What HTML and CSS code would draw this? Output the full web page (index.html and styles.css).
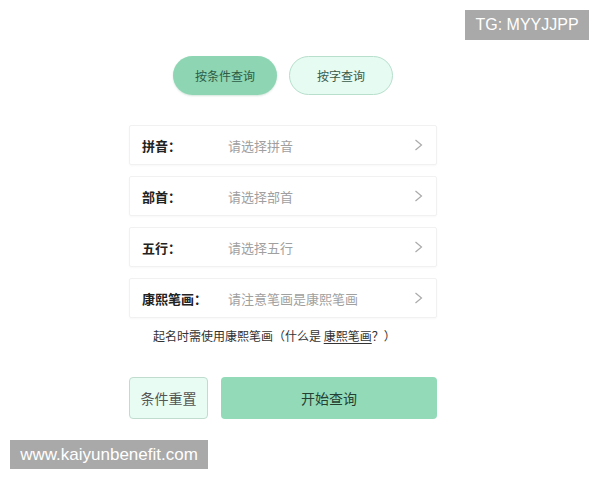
FILE: index.html
```html
<!DOCTYPE html>
<html lang="zh">
<head>
<meta charset="utf-8">
<link rel="stylesheet" href="styles.css">
</head>
<body>
<div class="page">
  <div class="tabs">
    <div class="tab tab-active">按条件查询</div>
    <div class="tab tab-idle">按字查询</div>
  </div>
  <div class="rows">
    <div class="row">
      <span class="label">拼音：</span>
      <span class="value">请选择拼音</span>
      <svg class="chev" width="9" height="12" viewBox="0 0 9 12"><polyline points="1.5,1 7.5,6 1.5,11" fill="none" stroke="#aaa" stroke-width="1.2"/></svg>
    </div>
    <div class="row">
      <span class="label">部首：</span>
      <span class="value">请选择部首</span>
      <svg class="chev" width="9" height="12" viewBox="0 0 9 12"><polyline points="1.5,1 7.5,6 1.5,11" fill="none" stroke="#aaa" stroke-width="1.2"/></svg>
    </div>
    <div class="row">
      <span class="label">五行：</span>
      <span class="value">请选择五行</span>
      <svg class="chev" width="9" height="12" viewBox="0 0 9 12"><polyline points="1.5,1 7.5,6 1.5,11" fill="none" stroke="#aaa" stroke-width="1.2"/></svg>
    </div>
    <div class="row">
      <span class="label">康熙笔画：</span>
      <span class="value">请注意笔画是康熙笔画</span>
      <svg class="chev" width="9" height="12" viewBox="0 0 9 12"><polyline points="1.5,1 7.5,6 1.5,11" fill="none" stroke="#aaa" stroke-width="1.2"/></svg>
    </div>
  </div>
  <p class="note">起名时需使用康熙笔画（什么是 <span class="link">康熙笔画</span>？）</p>
  <div class="actions">
    <div class="btn btn-reset">条件重置</div>
    <div class="btn btn-start">开始查询</div>
  </div>
</div>
<div class="wm wm-tg">TG: MYYJJPP</div>
<div class="wm wm-site">www.kaiyunbenefit.com</div>
</body>
</html>
```

FILE: styles.css
```css
html, body {
  margin: 0;
  padding: 0;
  background: #ffffff;
}
body {
  width: 600px;
  height: 480px;
  position: relative;
  overflow: hidden;
  font-family: "Noto Sans CJK SC", "Noto Sans", sans-serif;
}
.page {
  width: 308px;
  margin-left: 129px;
  padding-top: 56px;
  display: flex;
  flex-direction: column;
}
.tabs {
  display: flex;
  gap: 12px;
  margin-left: 44px;
}
.tab {
  width: 104px;
  height: 39px;
  box-sizing: border-box;
  border-radius: 20px;
  display: flex;
  align-items: center;
  justify-content: center;
  font-size: 12px;
}
.tab-active {
  background: #8ed5b3;
  color: #2d5c46;
  box-shadow: 0 1px 2px rgba(80, 150, 115, 0.25);
}
.tab-idle {
  background: #e6fbf2;
  border: 1px solid #b7dfcc;
  color: #3a5a4b;
}
.rows {
  margin-top: 30px;
  display: flex;
  flex-direction: column;
  gap: 11px;
}
.row {
  height: 40px;
  box-sizing: border-box;
  border: 1px solid #f1f1f1;
  border-radius: 2px;
  box-shadow: 0 1px 2px rgba(0, 0, 0, 0.03);
  display: flex;
  align-items: center;
  padding: 0 13px 0 12px;
}
.label {
  width: 86px;
  flex: none;
  font-size: 13px;
  font-weight: 700;
  color: #222;
}
.value {
  flex: 1;
  font-size: 13px;
  color: #a0a0a0;
}
.chev {
  flex: none;
}
.note {
  margin: 9px 0 0 24px;
  font-size: 12px;
  line-height: 18px;
  color: #333;
}
.link {
  text-decoration: underline;
  text-underline-offset: 2px;
}
.actions {
  margin-top: 32px;
  display: flex;
  gap: 13px;
}
.btn {
  height: 42px;
  box-sizing: border-box;
  border-radius: 4px;
  display: flex;
  align-items: center;
  justify-content: center;
  font-size: 14px;
}
.btn-reset {
  width: 79px;
  background: #e9fcf4;
  border: 1px solid #bfdccf;
  color: #555;
}
.btn-start {
  width: 216px;
  background: #93dab8;
  color: #263f33;
}
.wm {
  position: absolute;
  background: #a9a9a9;
  color: #ffffff;
  font-family: "Liberation Sans", Arial, sans-serif;
  display: flex;
  align-items: center;
  justify-content: center;
}
.wm-tg {
  top: 10px;
  left: 465px;
  width: 124px;
  height: 30px;
  font-size: 16px;
}
.wm-site {
  top: 440px;
  left: 10px;
  width: 198px;
  height: 29px;
  font-size: 17px;
}
```
